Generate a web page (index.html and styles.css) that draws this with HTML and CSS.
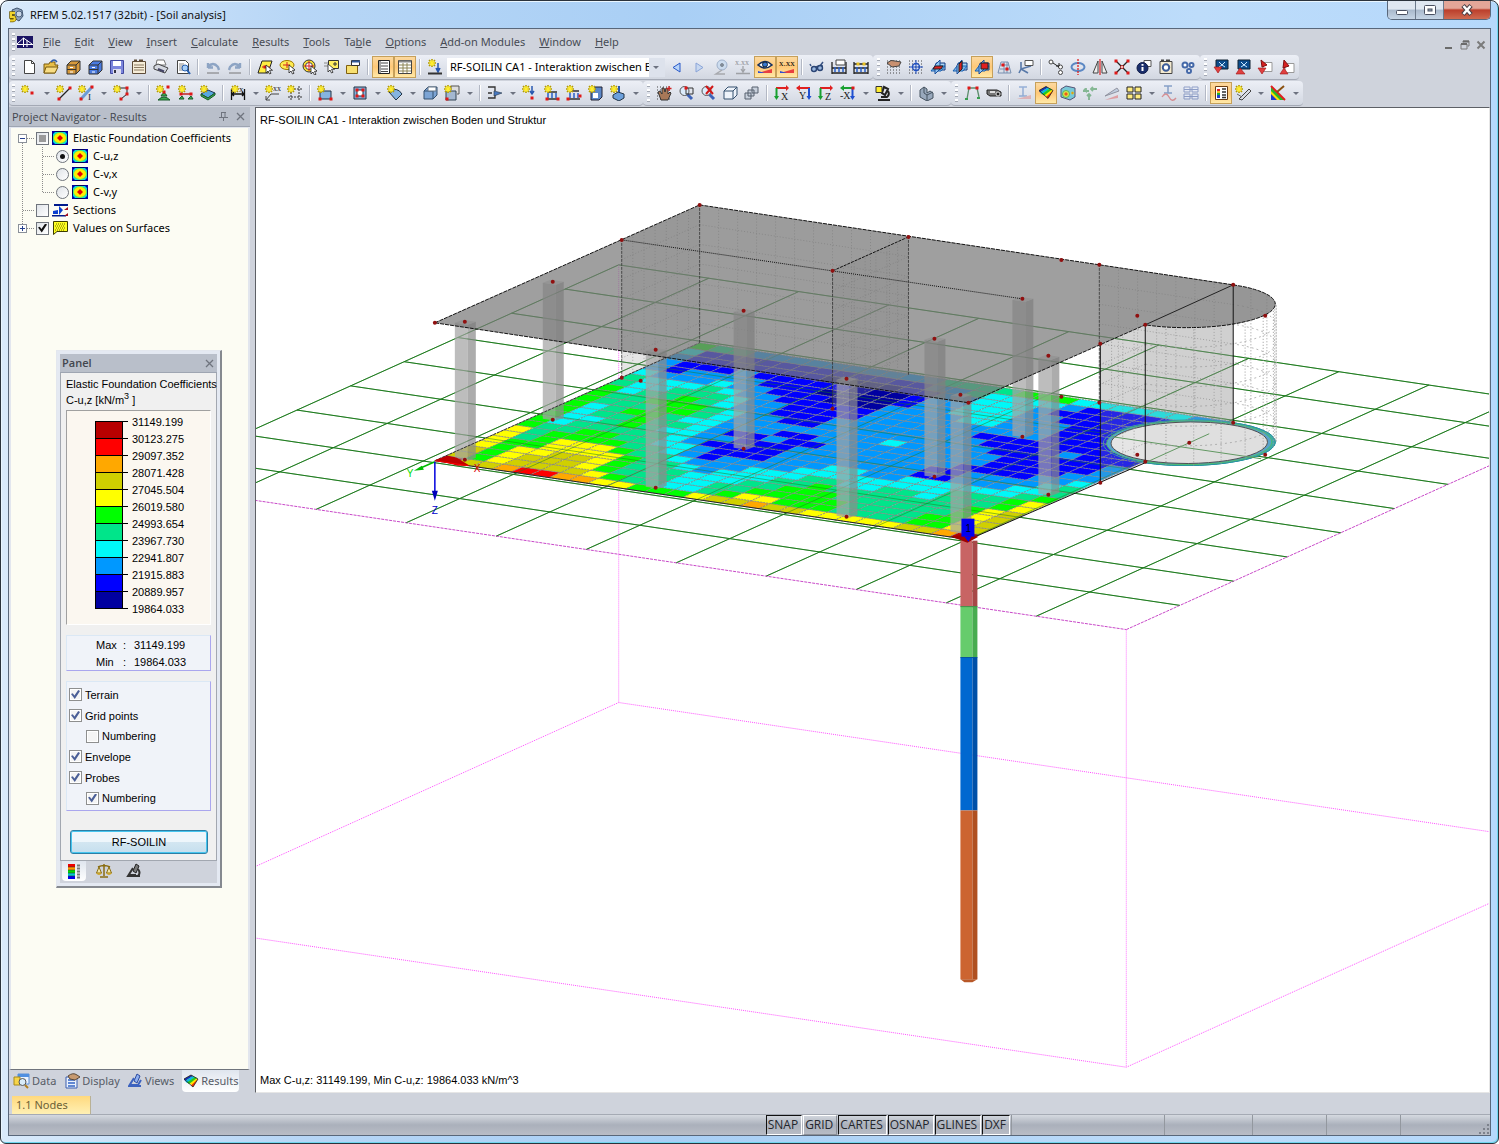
FILE: index.html
```html
<!DOCTYPE html>
<html lang="en">
<head>
<meta charset="utf-8">
<title>RFEM 5.02.1517 (32bit) - [Soil analysis]</title>
<link rel="stylesheet" href="styles.css">
</head>
<body>
<div class="window">
  <header class="titlebar">
    <svg class="app-icon" width="16" height="16" viewBox="0 0 16 16"><path d="M4 3l5-2 5 2 1 6-4 5-5-3z" fill="#8fa3bd" stroke="#40546e"/><circle cx="11" cy="7" r="3" fill="#c9d6e6" stroke="#51657f"/><path d="M7 6H3v4h3q2 3-1 3.500H2" fill="none" stroke="#6b5a00" stroke-width="3.500"/><path d="M7 6H3v4h3q2 3-1 3.500H2" fill="none" stroke="#f2d42c" stroke-width="2"/></svg>
    <h1>RFEM 5.02.1517 (32bit) - [Soil analysis]</h1>
    <div class="caption-buttons">
      <button class="cap" aria-label="Minimize"><svg width="14" height="12"><rect x="1.500" y="6.500" width="11" height="4" rx="1" fill="#fff" stroke="#4a5060"/></svg></button>
      <button class="cap" aria-label="Maximize"><svg width="14" height="12"><rect x="1.500" y="1.500" width="11" height="9" rx="1" fill="#fff" stroke="#4a5060"/><rect x="5" y="5" width="4" height="2" fill="#9ab" stroke="#4a5060"/></svg></button>
      <button class="cap close" aria-label="Close"><svg width="14" height="12"><path d="M3 1.500L11 10.500M11 1.500L3 10.500" stroke="#4a4046" stroke-width="4.500"/><path d="M3.500 2L10.500 10M10.500 2L3.500 10" stroke="#fff" stroke-width="2.500"/></svg></button>
    </div>
  </header>

  <div class="client">
    <nav class="menubar">
      <span class="grip"></span>
      <svg class="doc-icon" width="16" height="12" viewBox="0 0 16 12"><rect width="16" height="12" fill="#1b1464"/><path d="M0 8.500h16M6.500 2v9M0 8L6.500 2 15 8M10 4v7" stroke="#fff" fill="none"/></svg>
      <button><u>F</u>ile</button><button><u>E</u>dit</button><button><u>V</u>iew</button><button><u>I</u>nsert</button><button><u>C</u>alculate</button><button><u>R</u>esults</button><button><u>T</u>ools</button><button>Ta<u>b</u>le</button><button><u>O</u>ptions</button><button><u>A</u>dd-on Modules</button><button><u>W</u>indow</button><button><u>H</u>elp</button>
      <div class="mdi-buttons">
        <button aria-label="Minimize document"><svg width="10" height="10"><path d="M1 8h7" stroke="#6b6b6b" stroke-width="2"/></svg></button>
        <button aria-label="Restore document"><svg width="10" height="10"><path d="M3 2.500V1h6v5H7.500M1 4h6v5H1z" fill="none" stroke="#7b7b7b"/><path d="M1 4h6M3 1.500h6" stroke="#6b6b6b" stroke-width="2"/></svg></button>
        <button aria-label="Close document"><svg width="10" height="10"><path d="M1.500 1.500l7 7M8.500 1.500l-7 7" stroke="#7b7b7b" stroke-width="2"/></svg></button>
      </div>
    </nav>

    <div class="toolrow" id="tools-main"></div>
    <div class="toolrow" id="tools-insert"></div>

    <main class="workspace">
      <aside class="navigator">
        <header class="dock-title"><h2>Project Navigator - Results</h2>
          <button aria-label="Auto hide"><svg width="9" height="9"><path d="M2.500 0v5M6 0v5M2 .5h5M0 5.500h9M4.500 6v3" stroke="#6f747e" fill="none"/></svg></button>
          <button aria-label="Close navigator"><svg width="9" height="9"><path d="M1 1l7 7M8 1l-7 7" stroke="#6f747e" stroke-width="1.300"/></svg></button>
        </header>
        <ul class="tree" id="tree">
          <li><svg class="guide" width="20" height="18"><path d="M7.500 14v4M12 9.500h8" class="dots"/><rect x="3.500" y="5.500" width="8" height="8" fill="#fff" stroke="#8a9099"/><path d="M5 9.500h5" stroke="#24408e"/></svg><input type="checkbox" class="partial" id="t1"><svg class="ticon" width="16" height="14"><use href="#iso"/></svg><label for="t1">Elastic Foundation Coefficients</label></li>
          <li><svg class="guide" width="40" height="18"><path d="M7.500 0v18M27.500 0v18M28 9.500h12" class="dots"/></svg><input type="radio" name="c" id="t2" checked><svg class="ticon" width="16" height="14"><use href="#iso"/></svg><label for="t2">C-u,z</label></li>
          <li><svg class="guide" width="40" height="18"><path d="M7.500 0v18M27.500 0v18M28 9.500h12" class="dots"/></svg><input type="radio" name="c" id="t3"><svg class="ticon" width="16" height="14"><use href="#iso"/></svg><label for="t3">C-v,x</label></li>
          <li><svg class="guide" width="40" height="18"><path d="M7.500 0v18M27.500 0v10M28 9.500h12" class="dots"/></svg><input type="radio" name="c" id="t4"><svg class="ticon" width="16" height="14"><use href="#iso"/></svg><label for="t4">C-v,y</label></li>
          <li><svg class="guide" width="20" height="18"><path d="M7.500 0v18M8 9.500h12" class="dots"/></svg><input type="checkbox" id="t5"><svg class="ticon" width="16" height="14"><path d="M2 1h14v2H2zM0 12h14v1.500H0z" fill="#001a8c"/><path d="M1 8l5-1v4H1zM7 3l4 4-4 5z" fill="#0a3fd0"/><path d="M16 4v3h-4zM16 10v3h-4z" fill="#a01020"/></svg><label for="t5">Sections</label></li>
          <li><svg class="guide" width="20" height="18"><path d="M7.500 0v5M12 9.500h8" class="dots"/><rect x="3.500" y="5.500" width="8" height="8" fill="#fff" stroke="#8a9099"/><path d="M5 9.500h5M7.500 7v5" stroke="#24408e"/></svg><input type="checkbox" id="t6" checked><svg class="ticon" width="16" height="14"><path d="M1.500.5h14v10H5l-3.500 3z" fill="#ffff20" stroke="#3c3c00"/><path d="M4 3h10M3 5h10M4 7h10M3 9h10" stroke="#6b6b00" stroke-dasharray="1 1"/></svg><label for="t6">Values on Surfaces</label></li>
        </ul>
        <div class="nav-tabs" role="tablist">
          <button role="tab"><svg width="17" height="16"><path d="M5 1h11v10H5z" fill="#eaf3ff" stroke="#5b8fd6"/><path d="M5 1h11v3H5z" fill="#4f8fe0"/><path d="M1 4h6v8H1z" fill="#f7d548" stroke="#a88a1a"/><circle cx="9.500" cy="9" r="3.500" fill="#d8ecfa" stroke="#555"/><path d="M12 12l3 3" stroke="#b08020" stroke-width="2"/></svg>Data</button>
          <button role="tab"><svg width="16" height="16"><path d="M2 4h11v11H2z" fill="#eaf1fc" stroke="#3a5fb0"/><path d="M4 7h7M4 10h7M4 13h7" stroke="#3565c4" stroke-width="1.500"/><path d="M4 3q5-4 9-1l3 2-5 3-5-1z" fill="#c79a70" stroke="#5a4a3a"/></svg>Display</button>
          <button role="tab"><svg width="15" height="16"><path d="M9 1l3 2-3 7-3-2z" fill="#8fb0f0" stroke="#2a4aa0"/><path d="M6 5l-5 8h12M3 12h7l3-5" fill="none" stroke="#3c62bf" stroke-width="2"/></svg>Views</button>
          <button role="tab" class="active" aria-selected="true"><svg width="16" height="14"><use href="#surf"/></svg>Results</button>
        </div>
      </aside>

      <section class="view">
        <svg id="scene" viewBox="256 108 1234 985" preserveAspectRatio="xMinYMin slice"></svg>
        <p class="caption top">RF-SOILIN CA1 - Interaktion zwischen Boden und Struktur</p>
        <p class="caption bottom">Max C-u,z: 31149.199, Min C-u,z: 19864.033 kN/m^3</p>
      </section>
    </main>

    <div class="table-tabs"><button>1.1 Nodes</button></div>

    <footer class="status">
      <span class="message"></span>
      <button class="on">SNAP</button><button>GRID</button><button class="on">CARTES</button><button class="on">OSNAP</button><button class="on">GLINES</button><button class="on">DXF</button>
      <span class="cell wide"></span><span class="cell mid"></span><span class="cell"></span><span class="cell"></span><span class="cell last"><svg width="12" height="12"><path d="M9 1h2v2H9zM9 5h2v2H9zM5 5h2v2H5zM9 9h2v2H9zM5 9h2v2H5zM1 9h2v2H1z" fill="#7d828c"/></svg></span>
    </footer>
  </div>

  <section class="panel" aria-label="Panel">
    <header class="dock-title"><h2>Panel</h2><button aria-label="Close panel"><svg width="9" height="9"><path d="M1 1l7 7M8 1l-7 7" stroke="#6f747e" stroke-width="1.300"/></svg></button></header>
    <div class="panel-body">
      <p class="quantity">Elastic Foundation Coefficients<br>C-u,z [kN/m<sup>3</sup> ]</p>
      <div class="legend">
        <div class="bar"><i class="c1"></i><i class="c2"></i><i class="c3"></i><i class="c4"></i><i class="c5"></i><i class="c6"></i><i class="c7"></i><i class="c8"></i><i class="c9"></i><i class="c10"></i><i class="c11"></i></div>
        <ol><li>31149.199</li><li>30123.275</li><li>29097.352</li><li>28071.428</li><li>27045.504</li><li>26019.580</li><li>24993.654</li><li>23967.730</li><li>22941.807</li><li>21915.883</li><li>20889.957</li><li>19864.033</li></ol>
      </div>
      <dl class="range"><dt>Max</dt><dd>:</dd><dd>31149.199</dd><dt>Min</dt><dd>:</dd><dd>19864.033</dd></dl>
      <div class="options">
        <label><input type="checkbox" checked>Terrain</label>
        <label><input type="checkbox" checked>Grid points</label>
        <label class="sub"><input type="checkbox">Numbering</label>
        <label><input type="checkbox" checked>Envelope</label>
        <label><input type="checkbox" checked>Probes</label>
        <label class="sub"><input type="checkbox" checked>Numbering</label>
      </div>
      <button class="module">RF-SOILIN</button>
    </div>
    <div class="panel-tabs">
      <button class="active" aria-label="Color scale"><svg width="14" height="16"><path d="M1 1h7v3H1z" fill="#e00"/><path d="M1 4h7v3H1z" fill="#f90"/><path d="M1 7h7v3H1z" fill="#0d0"/><path d="M1 10h7v3H1z" fill="#0cc"/><path d="M1 13h7v3H1z" fill="#00e"/><path d="M1 4h7M1 7h7M1 10h7M1 13h7" fill="none" stroke="#333" stroke-width=".6"/><path d="M10 2.500h3M10 5.500h3M10 8.500h3M10 11.500h3M10 14.500h3" stroke="#777" stroke-width="2"/></svg></button>
      <button aria-label="Factors"><svg width="16" height="16"><path d="M8 1v12M2 4q6-3 12 0M4 14h8" stroke="#8a6d10" fill="none" stroke-width="1.500"/><path d="M3 4l-2.500 6h5zM13 4l-2.500 6h5z" fill="#f5e9a8" stroke="#8a6d10"/><path d="M0 10h6q-3 4-6 0zM10 10h6q-3 4-6 0z" fill="#c9a227"/></svg></button>
      <button aria-label="Filter"><svg width="16" height="16"><use href="#micro"/></svg></button>
    </div>
  </section>
</div>

<svg class="defs" width="0" height="0" aria-hidden="true">
  <symbol id="iso" viewBox="0 0 16 14"><rect x="0" y="0" width="16" height="14" fill="#000060"/><rect x="1" y="1" width="14" height="12" fill="#00d8e8"/><ellipse cx="8" cy="7" rx="7" ry="6" fill="#60e860"/><ellipse cx="8" cy="7" rx="6" ry="5" fill="#ffee00"/><path d="M8 4L11 7 8 10 5 7z" fill="#e80000"/><path d="M0 0h4L0 4zM16 0v4l-4-4zM0 14v-4l4 4zM16 14h-4l4-4z" fill="#0000a0"/></symbol>
  <symbol id="surf" viewBox="0 0 16 14"><path d="M1 5l7-4 7 4-5 7z" fill="#ffe600"/><path d="M1 5l7-4 2 1-8 5z" fill="#1030c0"/><path d="M2 7l8-5 2 1-8 6z" fill="#00b8e8"/><path d="M4 8.500L12 3l2 1-8 6z" fill="#20c820"/><path d="M8 11.500L15 5l-5 8z" fill="#f03000"/><path d="M1 5l7-4 7 4-5 8z" fill="none" stroke="#222" stroke-width=".8"/></symbol>
  <symbol id="micro" viewBox="0 0 16 16"><path d="M10 1l3 2-3 7-3-2z" fill="#777" stroke="#222"/><path d="M7 5l-5 8h12M4 12h6M12 6q3 4 0 7" fill="none" stroke="#333" stroke-width="2"/></symbol>
</svg>
<script src="app.js"></script>
</body>
</html>
```
FILE: styles.css
```css
* { box-sizing: border-box; }
body { margin: 0; background: #fff; font: 11px/14px "Noto Sans", "Open Sans", sans-serif; color: #222; }
button { font: inherit; color: inherit; background: none; border: 0; padding: 0; margin: 0; }
h1, h2, p, ul, ol, dl, dd { margin: 0; padding: 0; list-style: none; }
svg { display: block; flex: none; }
input { appearance: none; margin: 0; flex: none; }
.defs { position: absolute; }

.window {
  position: relative; min-height: 100vh; display: flex; flex-direction: column;
  padding: 0 7px 7px; border: 1px solid #2b333c; border-radius: 8px 8px 6px 6px;
  background: linear-gradient(90deg, #d9eafb 0, #b7d6f6 300px, #a9cff5 45%, #bddcfa 80%, #b5d8fb);
  box-shadow: inset 1px 1px 0 #e9f6ff, inset -1px -1px 0 #6fd6ee;
}
.titlebar { display: flex; height: 27px; align-items: center; gap: 6px; }
.titlebar h1 { flex: 1; font-size: 11px; line-height: 16px; font-weight: 400; color: #111; }
.caption-buttons { display: flex; align-self: flex-start; border: 1px solid #59677a; border-top: 0; border-radius: 0 0 5px 5px; overflow: hidden; }
.cap { width: 28px; height: 18px; display: grid; place-items: center; border-right: 1px solid #6c7a8c; background: linear-gradient(#dfe7f1 45%, #a9b9cc 50%, #c6d5e5); }
.cap.close { width: 46px; border-right: 0; background: linear-gradient(#e3a698 40%, #bb3f2c 50%, #cf6a50); }

.client { flex: 1; display: flex; flex-direction: column; border: 1px solid #59677a; background: #cfd3dc; }
.grip { width: 3px; height: 18px; background: repeating-linear-gradient(#fff 0 2px, #a3a8b3 2px 3px, transparent 3px 5px); }
.menubar { display: flex; align-items: center; height: 26px; padding-left: 3px; color: #474b54; }
.menubar > button { padding: 0 7px; line-height: 20px; }
.doc-icon { margin: 0 3px 0 2px; }
.mdi-buttons { margin: 6px 4px 0 auto; display: flex; gap: 6px; }

.toolrow { display: flex; height: 25px; margin-bottom: 1px; }
.strip { display: flex; align-items: center; padding: 0 1px 0 3px; border-radius: 4px; border-bottom: 1px solid #a4a9b5; background: linear-gradient(#eceff6, #dde1ea 60%, #d2d7e1); }
.strip .grip { margin-right: 3px; }
.strip + .strip { padding-left: 4px; }
.tool { width: 22px; height: 22px; display: grid; place-items: center; }
.tool.on { border: 1px solid #c6a05a; background: linear-gradient(#fcd9a0, #ffc877 50%, #ffe9a8); }
.tool.dim svg { opacity: .5; }
.drop { width: 13px; height: 22px; display: grid; place-items: center; }
.drop::before { content: ""; border: 3px solid transparent; border-top-color: #6d7280; border-bottom: 0; }
.sep { width: 2px; height: 16px; margin: 0 3px; background: linear-gradient(90deg, #b3b8c4 50%, #fff 50%); }
.case { width: 218px; height: 19px; margin: 0 1px; padding: 0 16px 0 3px; appearance: none; border: 0; border-radius: 0; font: inherit; color: #000; background: linear-gradient(90deg, transparent 202px, #dde2ec 202px) #fff; }
.case-wrap { display: flex; align-items: center; }
.case-wrap::after { content: ""; margin-left: -13px; margin-right: 7px; border: 3px solid transparent; border-top-color: #6d7280; border-bottom: 0; }

.workspace { flex: 1; display: flex; gap: 5px; }
.navigator { width: 241px; display: flex; flex-direction: column; }
.dock-title { display: flex; align-items: center; height: 20px; padding: 0 5px 0 3px; gap: 8px; background: #b9bfca; border-bottom: 1px solid #9ea5b2; color: #42464e; font-family: "Open Sans", sans-serif; }
.dock-title h2 { flex: 1; font-size: 11px; line-height: 14px; font-weight: 400; }
.tree { flex: 1; padding: 1px 0 0 4px; border: 1px solid #e2e6ee; border-width: 1px 2px; border-bottom-color: #6f747c; background: #fcfcf3; color: #000; }
.tree li { display: flex; align-items: center; height: 18px; }
.dots { stroke: #8c8c8c; stroke-dasharray: 1 1; fill: none; }
.tree input { width: 13px; height: 13px; margin-left: 1px; border: 1px solid #6f747c; background: linear-gradient(135deg, #dfe3e8, #fff); display: grid; place-items: center; }
.tree input[type="radio"] { border-radius: 50%; }
.tree input[type="radio"]:checked::before { content: ""; width: 5px; height: 5px; border-radius: 50%; background: #111; }
.tree input.partial::before { content: ""; width: 7px; height: 7px; background: #9a9a9a; }
input[type="checkbox"]:checked::before { content: ""; width: 9px; height: 9px; background: #111; clip-path: polygon(0 45%, 20% 35%, 38% 60%, 80% 0, 100% 10%, 42% 100%); }
.ticon { margin: 0 5px 0 3px; }
.nav-tabs { display: flex; height: 23px; padding: 0 6px 1px 4px; gap: 8px; color: #565b66; }
.nav-tabs button { display: flex; align-items: center; gap: 2px; }
.nav-tabs .active { padding: 0 1px; border-radius: 0 0 4px 4px; background: linear-gradient(#dfe5ee, #fff); }

.view { flex: 1; display: grid; border: 1px solid #5d6066; border-right-color: #e6e6e6; border-bottom-color: #e6e6e6; background: #fff; min-width: 0; }
.view > * { grid-area: 1 / 1; }
.view svg { width: 100%; height: 100%; min-height: 0; contain: size; }
.caption { z-index: 1; padding: 0 4px; font: 11px/14px "Liberation Sans", Arial, sans-serif; color: #000; }
.caption.top { align-self: start; padding-top: 5px; }
.caption.bottom { align-self: end; padding-bottom: 5px; }

.table-tabs { display: flex; height: 22px; padding: 3px 3px 0; border-bottom: 1px solid #a5aab4; }
.table-tabs button { width: 79px; padding-left: 4px; text-align: left; border: 1px solid #b9b195; border-width: 0 1px 0 0; color: #6e6136; background: linear-gradient(#ffd97e, #fff0b4); }
.status { display: flex; align-items: stretch; height: 20px; font-family: "Open Sans", sans-serif; background: linear-gradient(#d5d9e0, #aab0bb 50%, #b9bdc6); }
.message { flex: 1; }
.status button { padding: 0 3px 0 1px; margin-right: 1px; font-size: 12px; line-height: 16px; border: 1px solid; border-color: #fff #8c9098 #8c9098 #fff; color: #24262c; }
.status button.on { border-color: #111 #fff #fff #111; }
.cell { width: 74px; border-left: 1px solid #93989f; }
.cell.wide { width: 153px; }
.cell.mid { width: 88px; }
.cell.last { width: 90px; display: flex; align-items: flex-end; justify-content: flex-end; }

.panel { position: absolute; left: 55px; top: 349px; width: 166px; padding: 3px; border: 1px solid #e3e7ee; border-right: 2px solid #85898f; border-bottom: 2px solid #85898f; background: #e4e9f2; font: 11px/14px "Liberation Sans", Arial, sans-serif; color: #000; }
.panel .dock-title { height: 19px; padding: 0 3px 0 2px; }
.panel .dock-title h2 { font-weight: 600; }
.panel-body { display: flex; flex-direction: column; padding: 4px 5px 6px; border: 1px solid #a2a7b0; border-top: 0; background: #f0f0f0; }
.quantity { white-space: nowrap; line-height: 15px; height: 30px; margin-bottom: 3px; }
.quantity sup { font-size: 9px; line-height: 8px; }
.legend { display: flex; height: 215px; padding-left: 28px; border: 1px solid #a0a0a0; border-right-color: #fff; border-bottom-color: #fff; background: #fbf7f0; }
.bar { margin-top: 10px; width: 28px; height: 188px; display: flex; flex-direction: column; border: 1px solid #000; border-bottom: 0; }
.bar i { height: 17px; border-bottom: 1px solid #000; }
.legend ol { margin-top: 2px; }
.legend li { display: flex; align-items: center; height: 17px; }
.legend li::before { content: ""; width: 5px; height: 1px; margin-right: 4px; background: #000; }
.c1 { background: #b80000; } .c2 { background: #f00; } .c3 { background: #ffa800; } .c4 { background: #d0d000; }
.c5 { background: #ff0; } .c6 { background: #0f0; } .c7 { background: #00e58a; } .c8 { background: #00f8f8; }
.c9 { background: #0098ff; } .c10 { background: #00f; } .c11 { background: #0000a0; }
.range, .options { border: 1px solid #dbe8f5; border-right-color: #aaa6ee; border-bottom-color: #aaa6ee; background: #f0f3f9; }
.range { margin-top: 10px; padding: 1px 0 0 29px; height: 36px; display: grid; grid-template-columns: 27px 11px auto; line-height: 17px; }
.options { margin-top: 10px; height: 130px; padding: 2px; display: flex; flex-direction: column; }
.options label { display: flex; align-items: center; gap: 3px; height: 21px; }
.options .sub { padding-left: 17px; height: 20px; }
.options input { width: 13px; height: 13px; border: 1px solid #8e8f8f; background: #f4f4f4; display: grid; place-items: center; box-shadow: inset 0 0 0 1px #fff; }
.options input[type="checkbox"]:checked::before { background: #4b5f97; }
.module { margin: 19px 3px 0 4px; height: 24px; border: 1px solid #2c7fa5; border-radius: 3px; box-shadow: inset 0 0 0 1px #46c5ef; background: linear-gradient(#eef6fb 50%, #d3e6f1 50%, #c5dfee); }
.panel-tabs { display: flex; height: 22px; gap: 6px; padding-left: 2px; background: #cfd3dc; }
.panel-tabs button { width: 24px; height: 20px; display: grid; place-items: center; }
.panel-tabs .active { background: linear-gradient(#dfe5ee, #fff); border-radius: 0 0 4px 4px; }
```
FILE: app.js
```javascript
// ---------- icon drawing helpers (16 x 16 grid) ----------
const P = (d, f = 'none', s = 'none', w = 1) => `<path d="${d}" fill="${f}" stroke="${s}" stroke-width="${w}"/>`;
const dot = (x, y, c = '#e01818') => `<rect x="${x - 1.5}" y="${y - 1.5}" width="3" height="3" fill="${c}"/>`;
const ring = (x, y, r, f, s, w = 1) => `<circle cx="${x}" cy="${y}" r="${r}" fill="${f}" stroke="${s}" stroke-width="${w}"/>`;
const star = (x = 4, y = 4) => P(`M${x} ${y - 4}v8M${x - 4} ${y}h8M${x - 3} ${y - 3}l6 6M${x + 3} ${y - 3}l-6 6`, 'none', '#b39b00', 1.6) + P(`M${x} ${y - 3}v6M${x - 3} ${y}h6M${x - 2} ${y - 2}l4 4M${x + 2} ${y - 2}l-4 4`, 'none', '#ffee30', 1.2);
const txt = (t, x, y, c = '#333', s = 8) => `<text x="${x}" y="${y}" font-family="Liberation Serif" font-size="${s}" fill="${c}">${t}</text>`;
const cursor = (x, y) => P(`M${x} ${y}v8l2-2 1.500 3 1.500-.7-1.500-3h3z`, '#fff', '#222', .8);
const glass = P('M9 9l5 5', 'none', '#3c62b8', 3) + ring(6.5, 6, 4.5, '#dcecfb', '#555');
const cab = c => P('M2 6l4-4h9v9l-4 4H2z', c, '#333') + P('M2 6h9v9M11 6l4-4M2 10.500h9', 'none', '#333') + P('M5 8.500h3M5 13h3', 'none', '#fff');
const support = P('M4 8v5M8 8v5M12 8v5', 'none', '#2860c8', 1.5);
const planes = hot => P('M6 4h9v7H6z', '#a8d4f4', '#103880') + P('M1 12l4-5h10l-4 5z', '#78b4ec', '#1860b0') + P('M5 6l5-5v9l-5 5z', '#8ec4f0', '#1d4f9a') + P(hot, '#e02020', '#222');
const axis = (l, a, b) => P('M2 3h11', 'none', a, 2) + P('M12 0l3 3-3 3z', a) + P('M2.500 3v10', 'none', b, 2) + P('M0 11l2.500 4L5 11z', b) + txt(l, 7, 15, '#222', 10);
const grid = P('M1 2h14M1 5h14M1 8h14M1 11h14M1 14h14', 'none', '#444', 1).replace('/>', ' stroke-dasharray="1 2"/>');
const box = (c = '#9cc4ea') => P('M2 6l4-4h9v8l-4 4H2z', c, '#35506e') + P('M2 6h9v8M11 6l4-4', 'none', '#35506e');
const beam = c => P('M3 2h8M7 2v9M3 11h8', 'none', c, 1.5) + P('M1 14h14L15 10z', '#e08888');

const icons = {
  new: P('M3.500 1.500h7l3 3v10h-10z', '#fff', '#444') + P('M10.500 1.500v3h3', 'none', '#444'),
  open: P('M1 5h5l1-2h5v3h3l-3 8H1z', '#e8bf48', '#7a5c10') + P('M3 8h12l-3 6H1z', '#f8dd84', '#7a5c10') + P('M8 3q3-4 6 0', 'none', '#2d5ba8', 1.5),
  cab1: cab('#d79a3c'), cab2: cab('#4a7be0'),
  save: P('M1.500 1.500h13v13h-13z', '#7c86dc', '#4048a0') + P('M4 2h8v5H4z', '#fff') + P('M4 10h8v5H4z', '#dde') + P('M5 11h2v3H5z', '#334'),
  list: P('M1.500 2.500h13v12h-13z', '#f6edd8', '#5e4c38') + P('M3 1.500h3M8 1.500h4', 'none', '#5e4c38', 2) + P('M3 6h10M3 8.500h10M3 11h10', 'none', '#8b7a62'),
  print: P('M4 1h7l2 5H3z', '#fff', '#777') + P('M1 7l4-2 10 4-3 5-11-4z', '#d4d8e0', '#444') + P('M5 10l6 2.500', 'none', '#446', 2),
  preview: P('M2.500 1.500h8l3 3v10h-11z', '#fff', '#444') + P('M4 5h5M4 7h4M4 9h4M4 11h4', 'none', '#888') + ring(10, 9, 3, '#a8d0f8', '#2860b0') + P('M12 11l3 4', 'none', '#2860b0', 2),
  undo: P('M3 9V4M3 8q5-6 10 0l1 3M3 8.500h5', 'none', '#8da4c4', 2.4) + P('M2 14h12', 'none', '#777'),
  redo: P('M13 9V4M13 8q-5-6-10 0l-1 3M13 8.500H8', 'none', '#8da4c4', 2.4) + P('M2 14h12', 'none', '#777'),
  selpoly: P('M5 2h10l-4 12H1z', '#ffee40', '#222') + P('M5 8h8', 'none', '#c02020') + dot(8, 8) + cursor(9, 6),
  sellasso: `<ellipse cx="8" cy="6" rx="7" ry="4.5" fill="#ffec50" stroke="#a07800"/>` + P('M4 6h7M8 3v6', 'none', '#d02020') + cursor(10, 6),
  selring: ring(8, 7, 6, '#ffe830', '#333', 1) + ring(8, 7, 3.5, '#fff', '#444') + P('M8 2v10M3 7h10', 'none', '#e02020') + cursor(10, 7),
  selbox: P('M5.500 1.500h10v8h-10z', '#ffee60', '#333') + P('M10 5h4M12 3v4', 'none', '#333') + P('M1 4h4M1 7h4', 'none', '#888') + cursor(5, 5),
  selfold: P('M1.500 6.500h11v8h-11z', '#f8e070', '#806010') + P('M6.500 1.500h8v5h-8z', '#fff', '#333') + P('M7 2.500h8', 'none', '#335a9a', 2),
  doc: P('M3.500 1.500h11v13h-11z', '#fff', '#222') + P('M6 4h7M6 7h7M6 10h7M6 12.500h7M5 2v12', 'none', '#444'),
  table: P('M1.500 1.500h13v13h-13z', '#fff', '#444') + P('M2 2.500h12', 'none', '#888', 2) + P('M2 6h12M2 9h12M2 12h12M6 4v10M10 4v10', 'none', '#8c8455'),
  newload: star(5, 4) + P('M11 4v8M9 9l2 4 2-4', '#2858b0', '#2858b0', 1.5) + P('M1 14.500h14', 'none', '#333', 2),
  prev: P('M11 4v9L4 8.500z', '#b8d4f8', '#2858c8'), next: P('M5 4v9l7-4.500z', '#c8d8f0', '#8aa4d8'),
  eye1: ring(9, 6, 5, '#b8d4f0', '#5c7ca8') + ring(9, 6, 1.5, '#234', '#234') + P('M9 11L3 15h9', 'none', '#777', 1.5),
  xx1: txt('x.xx', 0, 6, '#333', 8) + P('M8 7v6M6 10l2 3 2-3M1 14.500h14', 'none', '#666', 1.3),
  eye2: P('M1 6q7-7 14 0-7 6-14 0z', '#fff', '#18305c', 1.6) + ring(8, 5.5, 2.5, '#3878d0', '#123') + P('M1 14L15 10v4z', '#e84040') + P('M1 14h7l-7-2z', '#3050d0'),
  xx2: txt('x.xx', 0, 7, '#000', 9) + P('M1 14L15 10v4z', '#e84040') + P('M1 14h7l-7-2z', '#3050d0'),
  glasses: P('M2 7L1 5M14 3l-3 4M3 9q5-2 11-2', 'none', '#3a5484', 1.5) + ring(5, 10, 2.5, '#9ab8e0', '#2a4474', 1.4) + ring(11, 9, 2.5, '#9ab8e0', '#2a4474', 1.4),
  loads1: P('M1 3v12M15 3v12M1 9h14M1 14h14', 'none', '#222', 1.3) + P('M5 1h9v5H5z', '#fff', '#444') + support,
  loads2: P('M1 3v12M15 3v12M1 5h14M1 9h14M1 14h14', 'none', '#222', 1.3) + dot(5, 5, '#e8c020') + dot(11, 5, '#e8c020') + support,
  gridhand: grid + P('M1 4q4-4 8-2l6 1-2 4-7 1z', '#c89070', '#444'),
  gridsnap: grid + ring(8, 8, 3.5, 'none', '#2050c0', 1.4) + P('M8 1v14M1 8h14', 'none', '#2050c0'),
  pl1: planes('M3 10l2-3h8l-2 3z'), pl2: planes('M7 5l3-3v8l-3 3z'), pl3: planes('M7 4h7v6H7z'),
  persp: P('M2 14L5 3h7l3 11zM4 10h10M4 6h9M8 3v11M11 3v11', 'none', '#7890b0') + dot(7, 6) + dot(11, 10),
  ucs: P('M3 3v7l10-3M3 10l-2 4M3 10l7 4', 'none', '#5878a8', 1.6) + P('M7 1.500h8v5H7z', '#fff', '#555'),
  copy: ring(3, 3, 2, '#fff', '#444') + ring(12.5, 8, 2, '#fff', '#444') + ring(12.5, 13.500, 2, '#fff', '#444') + P('M5 4l6 4M8 7h3v-3', 'none', '#222'),
  rot: `<ellipse cx="8" cy="8" rx="6.500" ry="4" fill="none" stroke="#5c88c4" stroke-width="2"/>` + P('M8 0v16', 'none', '#e02020', 1.3).replace('/>', ' stroke-dasharray="2 1"/>'),
  mirror: P('M6 2v12H1zM10 2v12h5z', '#eee', '#444') + P('M8 0v16', 'none', '#e02020', 1.2),
  explode: P('M2 2l12 12M14 2L2 14', 'none', '#222', 1.3) + dot(2, 2) + dot(14, 2) + dot(2, 14) + dot(14, 14) + ring(8, 8, 1.5, '#fff', '#c02020'),
  info: P('M8 1.500h7v6H8z', '#fff', '#555') + ring(6.5, 9, 5.5, '#1a2e6c', '#101c48') + P('M6.500 8v4M6.500 5v1.700', 'none', '#fff', 2),
  gearbox: P('M2 2.500h12v12H2z', '#f4ead0', '#444') + ring(8, 8.500, 3.2, '#fff', '#3c5c98', 2) + P('M3 1.500h3M8 1.500h4', 'none', '#444', 2),
  gears: ring(5, 6, 2.5, '#fff', '#4468a8', 2) + ring(11.5, 6, 2, '#fff', '#4468a8', 2) + ring(9, 12, 2, '#fff', '#4468a8', 2),
  film1: P('M3 1h12v9H3z', '#0c4c8c', '#123') + P('M6 3l3 3 3-3M6 8l3-2 3 2', 'none', '#cde8ff') + P('M1 8h8l-4 6z', '#e04040', '#a01010', .6),
  film2: P('M3 1h12v9H3z', '#0c4c8c', '#123') + P('M6 3l3 3 3-3M6 8l3-2 3 2', 'none', '#cde8ff') + P('M1 15h9L5 9z', '#e04040', '#a01010', .6),
  pdf1: P('M6 3.500h9v9H6z', '#fff', '#999') + P('M4 1l6 5-5 2z', '#d82020', '#801010') + P('M1 9h8l-4 6z', '#e04040', '#a01010', .6),
  pdf2: P('M6 4.500h9v9H6z', '#fff', '#999') + P('M5 1l5 6-6 2z', '#d82020', '#801010') + P('M1 15h8L5 9z', '#e04040', '#a01010', .6),

  node: star(4, 4) + dot(11, 8), line: P('M3 14L14 3', 'none', '#222', 1.3) + dot(3, 14) + dot(14, 3) + star(4, 4),
  member: P('M3 14L14 2', 'none', '#6c9cd8', 3) + txt('I', 10, 15, '#123', 9) + dot(3, 14) + dot(14, 2) + star(4, 4),
  polyline: P('M3 3h11v6l-6 5', 'none', '#222') + dot(14, 3) + dot(14, 9) + dot(8, 14) + star(4, 4),
  supp1: P('M5 11q3-6 6 0zM2 15q6-6 12 0z', '#3ca850', '#185c28') + dot(8, 7) + dot(12, 2) + star(4, 4),
  supp2: P('M3 9h10', 'none', '#c02020', 1.5) + P('M1 14h5l-2-3zM10 14h5l-2-3z', '#3ca850', '#185c28') + dot(3, 9) + dot(13, 9) + star(4, 4),
  supp3: P('M1 9l7-4 7 3-7 5z', '#58a8e0', '#235') + P('M1 11l7 4 7-5v-2l-7 5-7-4z', '#3ca850', '#185c28') + star(4, 4),
  dim: P('M1.500 4v11M14.500 4v11M2 9h12M4 7L2 9l2 2M12 7l2 2-2 2', 'none', '#111', 1.3) + star(5, 4) + txt('x', 9, 7, '#111', 9),
  comment: txt('xx', 8, 6, '#222', 8) + P('M14 9H6l-5 6M1 11v4h4', 'none', '#444') + star(4, 4),
  guides: P('M4 1v14M12 1v14M1 4h14M1 12h14', 'none', '#333').replace('/>', ' stroke-dasharray="2 1"/>') + star(4, 4),
  rect: P('M3 6h11v8H3z', '#86b4e0', '#234') + dot(3, 14) + dot(14, 14) + star(4, 4),
  opening: P('M2 2h12v12H2z', '#86b4e0', '#234') + P('M5 5h6v6H5z', '#fff', '#234') + dot(5, 5) + dot(11, 5) + dot(5, 11) + dot(11, 11),
  arc: P('M2 7q8-6 13 2l-6 6z', '#86b4e0', '#234') + star(4, 4),
  solid: box('#7ca4d4') + P('M6 2h8v4H6z', '#fff', '#678'),
  solid2: P('M7 3V1h8v8h-2', '#ddd', '#555') + P('M2 6h10v9H2z', '#a4b8d0', '#345') + dot(3, 14) + star(4, 4),
  connect: P('M1 2h7v4M1 8h4M1 13h7v-3', 'none', '#333', 1.3) + P('M7 6l8 2-8 3z', '#4878c0', '#234', .6),
  ld1: star(4, 4) + P('M10 1v8M8 6l2 3 2-3', 'none', '#2858b0', 1.5) + dot(10, 13),
  ld2: support + P('M4 7h9M3 14h11', 'none', '#333', 1.3) + dot(3, 14) + dot(14, 14) + star(4, 4),
  ld3: P('M4 6h9M2 14h12', 'none', '#333', 1.3) + support + dot(2, 14) + dot(14, 11) + star(4, 4),
  ld4: P('M3 5l3-3h8v10l-3 3H3z', '#5c88c8', '#223') + P('M5 8h5v5H5z', '#fff') + star(4, 4),
  ld5: star(4, 4) + P('M9 1v6', 'none', '#2858b0', 2) + P('M3 10l5-3 6 2v4l-5 3-6-3z', '#6ca0dc', '#234'),
  hand: grid + P('M5 15L2 7l2-1 2 3V3l2 0 1 4 1-4 2 1v5l2-2 1 1-3 7z', '#a87858', '#333') + P('M13 1v5M10.500 3.500h5', 'none', '#d02020', 1.3),
  zoomwin: glass + P('M8 3h7v6H8z', 'none', '#333') + dot(8, 3), zoomout: glass + P('M6 1l7 8M13 1L6 9', 'none', '#d01818', 2),
  cube: box('#eef3fa'), wire: P('M8 2h6v6H8zM4 5h6v6H4zM1 8h6v6H1z', '#c8d0dc', '#56606e'),
  ax: axis('X', '#e02020', '#18a030'), ay: P('M1 3h13', 'none', '#e02020', 2) + P('M4 0L0 3l4 3z', '#e02020') + P('M13 3v10', 'none', '#2050d0', 2) + P('M10.500 11l2.500 4 2.500-4z', '#2050d0') + txt('Y', 3, 14, '#222', 10), az: axis('Z', '#e02020', '#18a030'),
  amx: P('M3 3h10', 'none', '#18a030', 2) + P('M4 0L0 3l4 3z', '#18a030') + P('M12.500 3v10', 'none', '#2050d0', 2) + P('M10 11l2.500 4 2.500-4z', '#2050d0') + dot(13, 3) + txt('-X', 0, 14, '#222', 10),
  filter: P('M9 2l4 2-3 6-3-2zM3 15h12M6 12h6q3-2 1-6', 'none', '#222', 2) + P('M1 1.500h6v6H1z', '#ffee30', '#333'),
  render: P('M2 5l4-3 3 2v4l3-2 3 2v5l-6 3-7-4z', '#98a8bc', '#45525f') + P('M6 2v6l3 2v6M9 10l6-3', 'none', '#45525f'),
  frame: P('M3 14L5 3h8l2 9', 'none', '#5c8c6c', 1.3) + dot(5, 3) + dot(13, 3) + P('M1 14h3M13 13h3', 'none', '#38a050', 2),
  cam: P('M1 5h10l4 2v4H4L1 9z', '#777', '#222') + P('M4 7h5', 'none', '#ddd', 2) + ring(12, 9, 2, '#222', '#ddd'),
  b1: beam('#4878c0'), surf: '<use href="#surf" width="16" height="15"/>',
  iso3: P('M1 4l5-3 9 2v9l-5 3-9-3z', '#78c8d8', '#557') + ring(6, 9, 3.5, '#d8e850', '#58b858') + ring(6, 9, 1.5, '#e84020', '#f0a020') + ring(12.5, 8, 1, '#e84020', '#d8d020'),
  react: P('M1 6h6M4 3v3l-2-2M9 4h6M11 2L9 4l2 2M7 15V9M5 11l2-2 2 2', 'none', '#2a8a3c', 1.8),
  wing: P('M1 11L13 3l2 3z', '#a0b8d4', '#445') + P('M1 15L14 10v3z', '#e06060'),
  blocks: [[1, 2], [9, 2], [1, 9], [9, 9]].map(([x, y]) => P(`M${x} ${y}h6v5h-6z`, '#ffec80', '#222')).join(''),
  b2: P('M3 1h8M7 1v7M3 8h8', 'none', '#2858a0', 1.5) + P('M1 12q4-6 7 0t7 1', 'none', '#d04040', 1.3),
  tables: P('M1 2h6v5H1zM9 2h6v5H9zM1 9h6v5H1zM9 9h6v5H9zM1 4.500h14M1 11.500h14', '#e8eefa', '#3c58a0'),
  legend: P('M2.500 1.500h12v13h-12z', '#fff', '#6b3c10') + P('M4 4h3v2H4z', '#e02020') + P('M4 6h3v2H4z', '#f0c020') + P('M4 8h3v2H4z', '#20b030') + P('M4 10h3v3H4z', '#2040d0') + P('M9 4h4M9 7h4M9 10h4M9 12.500h4', 'none', '#333', 1.3),
  edit: P('M4 14L14 4l2 2-9 9z', '#d8dce4', '#444') + P('M2 9l5 3', 'none', '#666') + star(4, 4),
  scale: P('M1 1v14h14z', '#ffe000') + P('M1 1v5l9 9h5z', '#28b828') + P('M1 9v6h6z', '#2038d0') + P('M1 1l5 5 4 4 5 5', 'none', '#e02020', 2) + P('M7 7l7-6', 'none', '#8a5010', 2)
};

// "|" separator, "v" drop-down arrow, "*" pressed, "~" greyed, "#" load case selector
const rows = {
  'tools-main': [
    'new open cab1 cab2 save list print preview | undo redo | selpoly sellasso selring selbox selfold | *doc *table | newload # prev next ~eye1 ~xx1 *eye2 *xx2 | glasses loads1 loads2',
    'gridhand gridsnap pl1 pl2 *pl3 persp ucs | copy rot mirror explode info gearbox gears', 'film1 film2 pdf1 pdf2'],
  'tools-insert': [
    'node v line member v polyline v | supp1 supp2 supp3 | dim v comment guides | rect v opening v arc v solid solid2 v | connect v ld1 ld2 ld3 ld4 ld5 v',
    'hand zoomwin zoomout cube wire | ax ay az amx v filter v | render v',
    'frame cam | ~b1 *surf iso3 ~react ~wing blocks v ~b2 ~tables | *legend edit v scale v']
};
const toolHtml = t => {
  if (t === '|') return '<span class="sep"></span>';
  if (t === 'v') return '<button class="drop" aria-label="More"></button>';
  if (t === '#') return '<span class="case-wrap"><select class="case" aria-label="Load case"><option>RF-SOILIN CA1 - Interaktion zwischen Boden und Struktur</option></select></span>';
  const cls = { '*': ' on', '~': ' dim' }[t[0]] || '', name = t.replace(/^[*~]/, '');
  return `<button class="tool${cls}" aria-label="${name}"><svg width="16" height="16" viewBox="0 0 16 16">${icons[name]}</svg></button>`;
};
for (const id in rows) document.getElementById(id).innerHTML =
  rows[id].map(s => `<div class="strip"><span class="grip"></span>${s.split(' ').map(toolHtml).join('')}</div>`).join('');

// ---------- model view ----------
const out = [];
const add = s => out.push(s);
const f = n => Math.round(n * 10) / 10;
const pts = a => a.map(p => f(p[0]) + ',' + f(p[1])).join(' ');
const poly = (a, fill, extra = '') => add(`<polygon points="${pts(a)}" fill="${fill}" ${extra}/>`);
const ln = (a, b, c, extra = '') => add(`<line x1="${f(a[0])}" y1="${f(a[1])}" x2="${f(b[0])}" y2="${f(b[1])}" stroke="${c}" ${extra}/>`);
const H = 138;
const up = p => [p[0], p[1] - H];

// soil box and terrain grid
const T = (a, b) => [136 + 991 * a + 483 * b, 483 + 147 * a - 218 * b];
const down = p => [p[0], p[1] + 438];
const terrain = extra => {
  for (let i = 0; i < 11; i++) ln(T(i / 11, 0), T(i / 11, 1), '#1d7a1d', extra);
  for (let i = 1; i < 10; i++) ln(T(0, i / 9), T(1, i / 9), '#1d7a1d', extra);
};
terrain('');
const corners = [T(0, 0), T(1, 0), T(1, 1), T(0, 1)];
corners.forEach((c, i) => {
  const n = corners[(i + 1) % 4];
  if (i < 2) ln(c, n, '#c848c8', 'stroke-dasharray="3 1"');
  ln(down(c), down(n), '#ff50ff', 'stroke-dasharray="1 1"');
  ln(c, down(c), '#ff70ff', 'stroke-dasharray="1 1"');
});

// foundation slab: one letter per finite element, front row first
const colors = { D: '#b80000', R: '#f00', O: '#ffa800', K: '#d0d000', Y: '#ff0', G: '#0f0', T: '#00e58a', C: '#00f8f8', L: '#0098ff', B: '#00f', N: '#0000a0' };
const mesh = [
  'DKKORROOYYGGGYKKOKKYYYYYKKOD', 'KGYKKKKYGTTCCTGYYGGGTTTTGGYK', 'KGYKKKYGTTTCCTTGGGGGTTTTGGYK', 'YGYYKKYGTTTCCCTTGGGTTTTTTGYK',
  'YGGYYYYGTTCLCCCTTGTTTTTTTGYK', 'YTGYYYGTTCLLLCCCTTCCTTCTTTGY', 'YTGGGGTTCLBLLLLCCCCCCCCTTTGY', 'GTTGGTTCCLBBBLLLCCLLCCCCCCTG',
  'GCTTTTTCLBBBBLLLLLLLBBLLLCCT', 'GCCTGTCCLLBBBLLLLLLLBBLLLLCT', 'GCTTGTTCLBBLBBLLLLLLLBBBBLLC', 'GCTGGTCCLLLBBLLLLLLLLLBBBBLL',
  'GTTTGGTCLLLLLLLLCLLLLLBBBBBL', 'GTTGGGTCLLBBLLLLLLLLLBBBBBBL', 'GCTTGTCLLBBBLLLLLLLLBBBBLBBB', 'TCCTTTCLLBBBBLLLLLLBBBBBBBBB',
  'TCCCTCLLBBBBBLLLLLLLLLBBBBBB', 'CLLLCLLBBBNNNLLLLCCLLLBBBBBB', 'LBLLLLBBBNNNNBLLCCCLLLBBBBBB', 'LBBBLBBBBBNNNBLLCCCLLBBBBBBB',
  'LBBBBBBBNNNNBBLLCCCLBBBBBBBB', 'CBBBBBBBBBBBBLLTCCCCLBBBBBBB', 'GTTLLLLLLLLLLTTTTGGGCCCCCCLL'];
const F = (u, v) => [435 + 534 * u + 265 * v, 461 + 79 * u - 118 * v];
mesh.forEach((row, j) => [...row].forEach((c, i) =>
  poly([F(i / 28, j / 23), F((i + 1) / 28, j / 23), F((i + 1) / 28, (j + 1) / 23), F(i / 28, (j + 1) / 23)], colors[c], 'stroke="#858585" stroke-width=".8" stroke-dasharray="2 1"')));
terrain('stroke-opacity=".5"');

// round end: a circle in plan, projected
const circ = (r, from, to, dy = 0) => {
  const a = [];
  for (let t = from; t <= to + .001; t += (to - from) / 48)
    a.push([1190 + r * (74 * Math.cos(t) + 44 * Math.sin(t)), 443 + r * (11 * Math.cos(t) - 20 * Math.sin(t)) - dy]);
  return a;
};
const PI = Math.PI;
poly(circ(1, -PI / 2, PI / 2), '#18b8b0', 'stroke="#087c8c"');
poly(circ(1, 0, 2 * PI), 'none', 'stroke="#1898a8"');
poly(circ(.96, 0, 2 * PI), '#40a8e0', 'stroke="#2ecc60"');
poly(circ(.91, 0, 2 * PI), '#fff', 'stroke="#333"');
ln([1113, 437], [1262, 459], '#4c9a4c'); ln([1146, 463], [1210, 434], '#4c9a4c');

// walls with their element mesh
const wall = (a, b, n, m, o = .4) => {
  poly([a, b, up(b), up(a)], '#969696', `fill-opacity="${o}"`);
  for (let i = 1; i < n; i++) { const p = [a[0] + (b[0] - a[0]) * i / n, a[1] + (b[1] - a[1]) * i / n]; ln(p, up(p), '#888', 'stroke-dasharray="1 2" stroke-width=".7"'); }
  for (let i = 1; i < m; i++) ln([a[0], a[1] - H * i / m], [b[0], b[1] - H * i / m], '#888', 'stroke-dasharray="1 2" stroke-width=".7"');
};
wall([700, 343], [909, 375], 11, 7, .1);
wall([622, 378], [700, 343], 7, 7, .25);
wall([833, 409], [909, 375], 7, 7, .25);
wall([1100, 403], [1234, 423], 7, 7, .2);
wall([1101, 483], [1146, 463], 4, 7, .25);
const arc = circ(1, -PI / 2, PI / 2);
poly([...arc, ...arc.map(up).reverse()], '#969696', 'fill-opacity=".3"');
for (let i = 4; i < 48; i += 5) ln(arc[i], up(arc[i]), '#999', 'stroke-dasharray="1 2"');
for (let k = 1; k < 7; k++) add(`<polyline points="${pts(circ(1, -PI / 2, PI / 2, H * k / 7))}" fill="none" stroke="#999" stroke-width=".7" stroke-dasharray="2 3"/>`);
ln([1277, 305], [1277, 443], '#aaa', 'stroke-dasharray="2 1"');

// columns
const cols = [[553, 420], [465, 460], [744, 449], [656, 488], [1023, 437], [935, 477], [847, 517], [1049, 495], [961, 533]];
for (const [x, y] of cols) {
  poly([[x - 10, y - 1], [x + 3, y + 1], [x + 3, y - H + 3], [x - 10, y - H + 1]], '#a4a4a4', 'fill-opacity=".72"');
  poly([[x + 3, y + 1], [x + 11, y - 2], [x + 11, y - H], [x + 3, y - H + 3]], '#8c8c8c', 'fill-opacity=".72"');
  poly([[x - 10, y - H + 1], [x - 2, y - H - 2], [x + 11, y - H], [x + 3, y - H + 3]], '#ccc', 'fill-opacity=".7"');
}

// slab outline, roof plate and edges
ln(F(0, 0), F(1, 0), '#222'); ln(F(0, 0), F(0, 1), '#333', 'stroke-dasharray="3 1"'); ln(F(1, 0), [1146, 463], '#111');
poly([[435, 323], [700, 205], [1234, 285], ...circ(1, -PI / 2, PI / 2, H).reverse(), [969, 403]], '#7a7a7a', 'fill-opacity=".72" stroke="#111" stroke-dasharray="4 1"');
ln([622, 240], [1023, 299], '#111', 'stroke-dasharray="1 1"');
ln([909, 237], [833, 271], '#111', 'stroke-dasharray="3 1"');
ln([1146, 325], [1234, 285], '#222');
[[622, 378], [700, 343], [833, 409], [909, 375], [1100, 403], [1101, 483], [1146, 463], [1234, 423]].forEach(p =>
  ln(p, up(p), p[1] > 420 ? '#111' : '#333', p[1] > 420 ? '' : 'stroke-width=".8" stroke-dasharray="3 1"'));

// sampled soil probe
[[541, 607, '#c86464', '#a84848'], [607, 658, '#66cc6c', '#48ac50'], [658, 811, '#0068d0', '#0050a8'], [811, 980, '#cc6430', '#b05020']].forEach(([a, b, l, d]) => {
  add(`<rect x="961" y="${a}" width="12" height="${b - a}" fill="${l}"/><rect x="973" y="${a}" width="5" height="${b - a}" fill="${d}"/>`);
});
poly([[961, 980], [978, 980], [973, 983], [965, 983]], '#b85828');
ln([961, 607], [978, 607], '#3f8f45'); ln([961, 658], [978, 658], '#0050a0');
poly([[952, 537], [968, 534], [979, 537], [968, 543]], '#a00000');
add('<rect x="962" y="519" width="13" height="18" fill="#0000f0"/><path d="M965 537h7l-3 5z" fill="#0000f0"/><text x="966" y="532" font-family="Liberation Sans" font-size="10" fill="#001">1</text>');

// nodes
[[435, 323], [465, 322], [553, 282], [622, 240], [700, 205], [833, 271], [909, 237], [1062, 260], [1100, 265], [1234, 285], [1023, 299], [1138, 316], [1146, 325], [1266, 316], [1101, 344], [656, 350], [744, 311], [847, 379], [935, 339], [1049, 356], [961, 395], [969, 403],
 [465, 460], [553, 420], [622, 378], [641, 381], [656, 488], [744, 449], [833, 409], [847, 517], [935, 477], [1023, 437], [1049, 495], [1062, 397], [1100, 403], [1101, 483], [1146, 462], [1138, 455], [1190, 443], [1234, 423], [1266, 455]]
  .forEach(([x, y]) => add(`<circle cx="${x}" cy="${y}" r="2" fill="#901010"/>`));

// axis tripod
add('<path d="M436 460l12-4 9 2 13 8-12 0z" fill="#c00000"/><path d="M435 461l33 5" stroke="#f00" fill="none"/><path d="M435 462l-16 7" stroke="#0b0" stroke-width="1.500"/><path d="M414 471l8-5 2 4z" fill="#0b0"/><path d="M435 462v30" stroke="#00d" stroke-width="1.500"/><path d="M432 491h6l-3 10z" fill="#00b"/>');
add('<g font-family="Liberation Sans" font-size="10"><text x="407" y="477" fill="#0d0">Y</text><text x="474" y="472" fill="#d00">X</text><text x="432" y="514" fill="#00c">Z</text></g>');
document.getElementById('scene').innerHTML = out.join('');
```
